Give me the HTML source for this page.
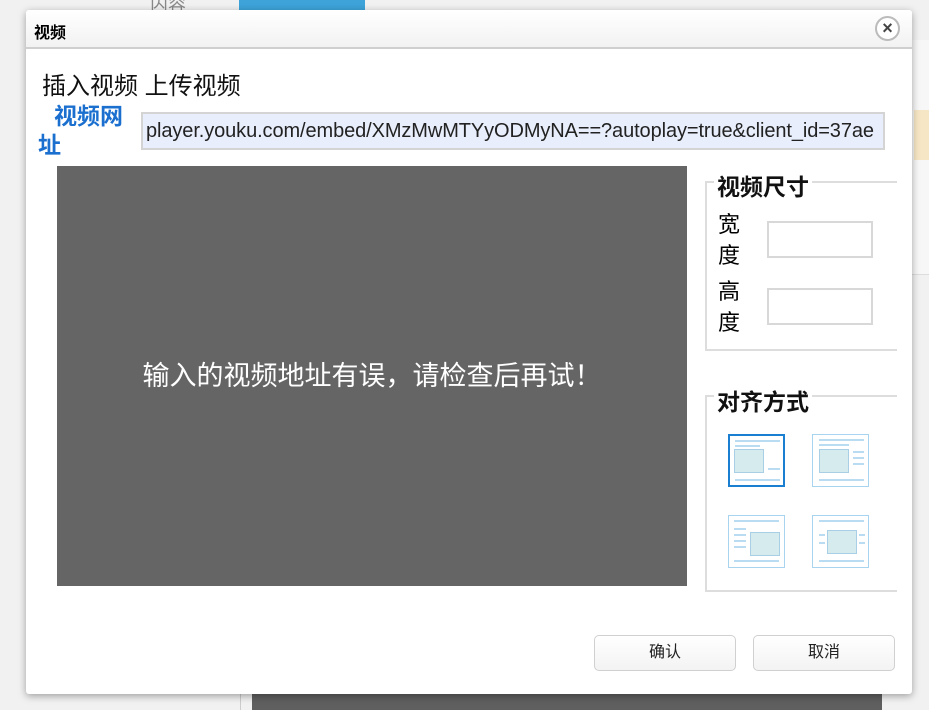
<!DOCTYPE html>
<html><head><meta charset="utf-8"><style>
*{margin:0;padding:0;box-sizing:border-box}
body{width:929px;height:710px;overflow:hidden;background:#f1f1f1;position:relative;font-family:"Liberation Sans","Noto Sans CJK SC",sans-serif}
.abs{position:absolute}
.dlg{left:26px;top:10px;width:886px;height:684px;background:#fff;box-shadow:0 2px 8px rgba(0,0,0,.35);border-radius:3px}
.title{left:0;top:0;width:886px;height:39px;background:linear-gradient(#fff,#f2f2f2);border-bottom:2px solid #cfcfcf;border-radius:3px 3px 0 0}
.btn{width:142px;height:36px;border:1px solid #d0d0d0;border-radius:5px;background:linear-gradient(#fff,#f3f3f3);font-size:16px;text-align:center;line-height:34px;color:#222}
.fs{border:2px solid #ddd;border-right:none}
.legend{background:#fff;font-weight:bold;font-size:23px;padding:0 3px;color:#111}
.inp{width:106px;height:37px;border:2px solid #d8d8d8}
.ic{width:57px;height:53px;border:1px solid #a8d4f0;background:#fff}
.ic i{position:absolute;height:2px;background:#b9dcf3}
.ic b{position:absolute;width:30px;height:24px;background:#d6ebee;border:1px solid #a9cfe6}
</style></head><body>
<div class="abs" style="left:150px;top:0;font-size:18px;color:#888;line-height:10px">内容</div>
<div class="abs" style="left:239px;top:0;width:126px;height:10px;background:#3da3d9"></div>
<div class="abs" style="left:912px;top:40px;width:17px;height:235px;background:#f7f7f7;border-bottom:1px solid #ddd"></div>
<div class="abs" style="left:914px;top:110px;width:15px;height:50px;background:#f6e6c5"></div>
<div class="abs" style="left:240px;top:694px;width:1px;height:16px;background:#ccc"></div>
<div class="abs" style="left:252px;top:694px;width:630px;height:16px;background:#5f5f5f"></div>
<div class="abs dlg">
 <div class="abs title"><div class="abs" style="left:8px;top:9px;font-size:16px;font-weight:bold">视频</div>
  <div class="abs" style="left:849px;top:6px;width:25px;height:25px;border-radius:50%;border:2px solid #bbb;background:#fff;text-align:center;line-height:20px;font-weight:bold;font-size:18px;color:#444">×</div></div>
 <div class="abs" style="left:16px;top:56px;font-size:24px;color:#111">插入视频 上传视频</div>
 <div class="abs" style="left:20px;top:92px;width:100px;font-size:23px;font-weight:bold;color:#1a6fcf;line-height:29px;text-indent:8px">视频网<br><span style="margin-left:-8px">址</span></div>
 <div class="abs" style="left:115px;top:102px;width:744px;height:38px;background:#e8eefb;border:2px solid #d4d4d4;font-size:20px;line-height:34px;padding-left:3px;color:#222;white-space:nowrap;overflow:hidden;letter-spacing:-0.1px">player.youku.com/embed/XMzMwMTYyODMyNA==?autoplay=true&amp;client_id=37ae</div>
 <div class="abs" style="left:31px;top:156px;width:630px;height:420px;background:#656565;color:#fff;font-size:27px;text-align:center;line-height:420px">输入的视频地址有误，请检查后再试！</div>
 <div class="abs fs" style="left:679px;top:171px;width:192px;height:170px"></div>
 <div class="abs legend" style="left:688px;top:158px">视频尺寸</div>
 <div class="abs" style="left:692px;top:199px;font-size:22px;line-height:31px">宽<br>度</div>
 <div class="abs inp" style="left:741px;top:211px"></div>
 <div class="abs" style="left:692px;top:266px;font-size:22px;line-height:31px">高<br>度</div>
 <div class="abs inp" style="left:741px;top:278px"></div>
 <div class="abs fs" style="left:679px;top:385px;width:192px;height:197px"></div>
 <div class="abs legend" style="left:688px;top:373px">对齐方式</div>
 <div class="abs ic" style="left:702px;top:424px;border:2px solid #1a7fd0"><i style="left:5px;top:4px;width:45px"></i><i style="left:5px;top:9px;width:25px"></i><b style="left:4px;top:13px"></b><i style="left:38px;top:32px;width:12px"></i><i style="left:5px;top:43px;width:45px"></i></div>
 <div class="abs ic" style="left:786px;top:424px"><i style="left:6px;top:4px;width:45px"></i><i style="left:6px;top:9px;width:30px"></i><b style="left:6px;top:14px"></b><i style="left:40px;top:16px;width:11px"></i><i style="left:40px;top:22px;width:11px"></i><i style="left:40px;top:28px;width:11px"></i><i style="left:6px;top:44px;width:45px"></i></div>
 <div class="abs ic" style="left:702px;top:505px"><i style="left:5px;top:4px;width:45px"></i><i style="left:5px;top:12px;width:12px"></i><i style="left:5px;top:18px;width:12px"></i><i style="left:5px;top:24px;width:12px"></i><i style="left:5px;top:30px;width:12px"></i><b style="left:21px;top:16px"></b><i style="left:5px;top:44px;width:45px"></i></div>
 <div class="abs ic" style="left:786px;top:505px"><i style="left:6px;top:4px;width:45px"></i><i style="left:6px;top:18px;width:6px"></i><i style="left:6px;top:26px;width:6px"></i><b style="left:14px;top:14px"></b><i style="left:46px;top:18px;width:6px"></i><i style="left:46px;top:26px;width:6px"></i><i style="left:6px;top:44px;width:45px"></i></div>
 <div class="abs btn" style="left:568px;top:625px">确认</div>
 <div class="abs btn" style="left:727px;top:625px">取消</div>
</div>
</body></html>
